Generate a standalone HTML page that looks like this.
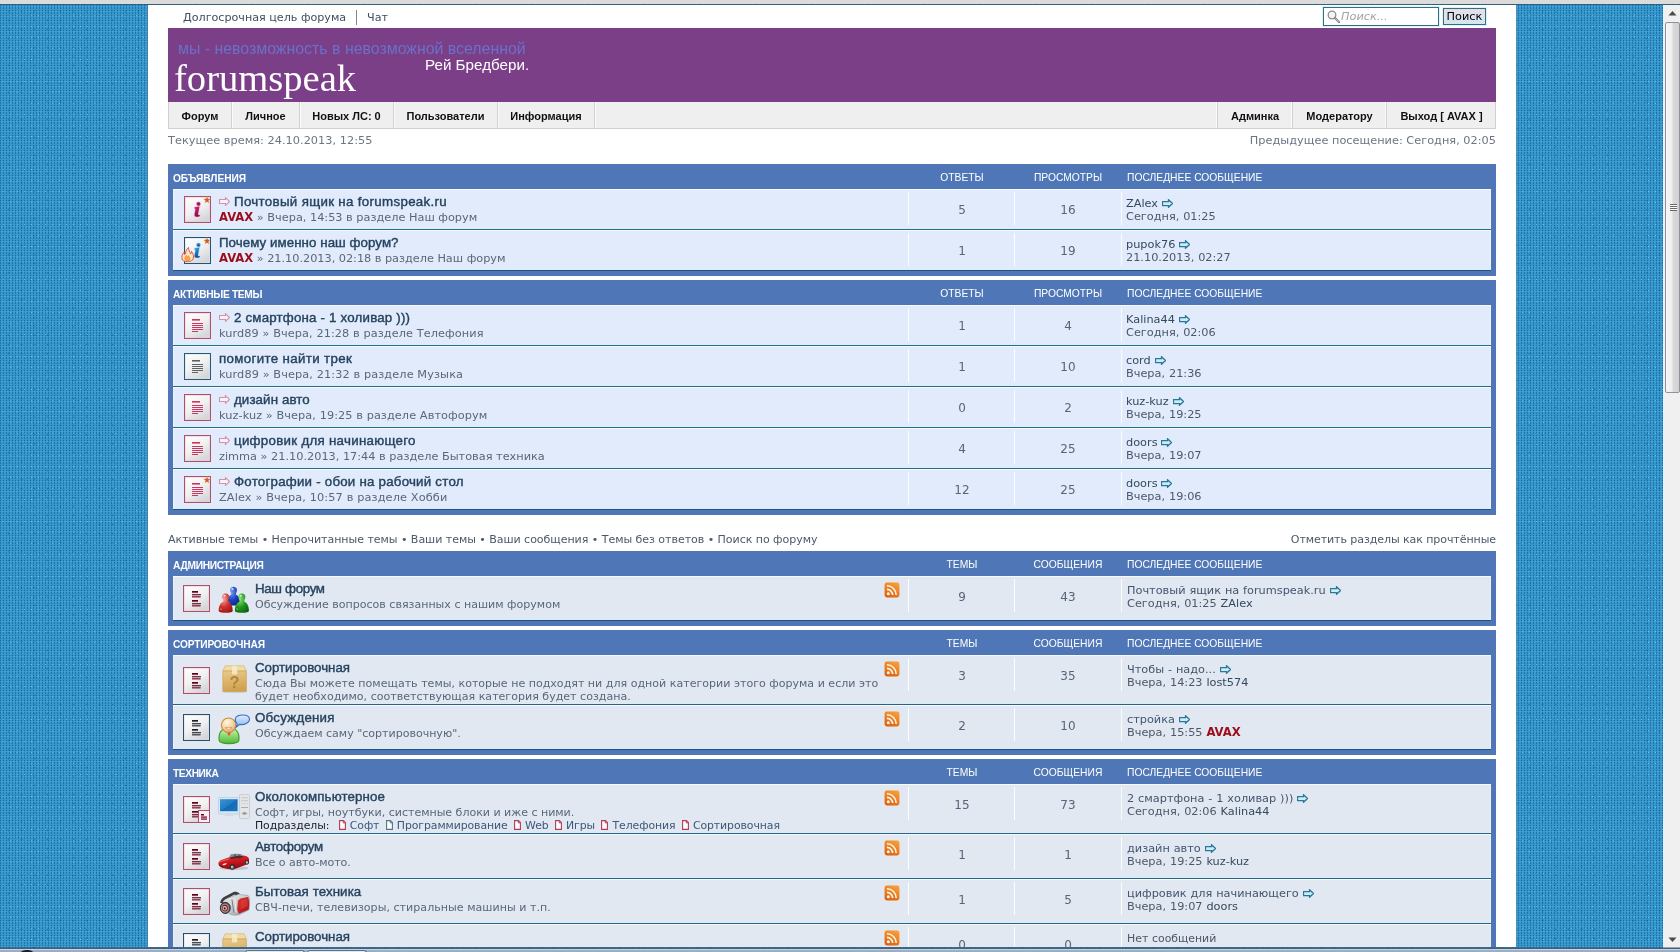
<!DOCTYPE html>
<html lang="ru"><head><meta charset="utf-8"><title>forumspeak • Главная страница</title>
<style>
html,body{margin:0;padding:0}
body{width:1680px;height:952px;overflow:hidden;position:relative;background-color:#3697ca;
background-image:radial-gradient(circle at .5px .5px,rgba(5,75,140,.6) 0,rgba(5,75,140,.6) .45px,rgba(5,75,140,0) 1.05px),radial-gradient(circle at .5px 3px,rgba(5,75,140,.5) 0,rgba(5,75,140,.5) .45px,rgba(5,75,140,0) 1.05px),radial-gradient(circle at 2px 1.75px,rgba(120,205,250,.22) 0,rgba(120,205,250,.22) .5px,rgba(120,205,250,0) 1.1px),radial-gradient(circle at 3.5px 4.5px,rgba(140,220,255,.55) 0,rgba(140,220,255,.55) .5px,rgba(140,220,255,0) 1px),radial-gradient(circle at 8.5px 2.5px,rgba(0,60,120,.35) 0,rgba(0,60,120,.35) .6px,rgba(0,60,120,0) 1.2px);
background-size:3px 5px,3px 5px,3px 5px,7px 11px,13px 9px;
font-family:"DejaVu Sans","Liberation Sans",sans-serif;font-size:11.3px;color:#56657a;line-height:13px}
*{box-sizing:border-box}
a{color:inherit;text-decoration:none}
.abs{position:absolute}
#chrome-top{position:absolute;left:0;top:0;width:1680px;height:4px;background:#dbdbdb}
#chrome-line{position:absolute;left:0;top:4px;width:1680px;height:1px;background:rgba(30,40,50,.5)}
#wrap{position:absolute;left:148px;top:5px;width:1368px;height:942px;background:#fff;overflow:hidden;box-shadow:0 0 2px 1px rgba(120,140,155,.45)}
#page{position:absolute;left:20px;top:-5px;width:1328px;height:952px;will-change:transform}
#sb{position:absolute;left:1663px;top:5px;width:17px;height:943px;background:#f0f0f0;border-left:1px solid #e4f2fa}
#sb .thumb{position:absolute;left:1px;top:17px;width:15px;height:371px;border:1px solid #8f9399;border-radius:2px;background:linear-gradient(90deg,#f7f7f7 0,#eeeeee 45%,#d9d9db 55%,#d2d2d5 100%)}
#sb .grip{position:absolute;left:4px;top:181px;width:7px;height:7px;background:repeating-linear-gradient(0deg,#6a6a6a 0,#6a6a6a 1px,#fdfdfd 1px,#fdfdfd 2px)}
#task{position:absolute;left:0;top:947px;width:1680px;height:5px;background:linear-gradient(180deg,rgba(40,70,100,.45) 0,rgba(40,70,100,.45) 1px,#46617a 1px,#46617a 2px,#c3d3e3 2px,#c3d3e3 3px,#9fb1c6 3px,#98abc1 100%)}
#task .b{position:absolute;top:3px;height:4px;border:1px solid #5e6f82;border-bottom:0;border-radius:3px 3px 0 0;background:#dfe8f2}
#task .orb{position:absolute;left:18px;top:3px;width:18px;height:8px;border-radius:10px 10px 0 0;background:#16202b}

.toplinks{position:absolute;left:15px;top:10px;height:15px;font-size:11.15px;line-height:15px;color:#3f4f60;white-space:nowrap}
.toplinks .sep{position:absolute;left:173px;top:0;width:1px;height:15px;background:#7a8796}
#sbox{position:absolute;left:1155px;top:7px;width:116px;height:19px;border:1px solid #2f7180;background:#fff;box-shadow:0 0 0 1px #d9f3f8}
#sbox span{position:absolute;left:17px;top:2px;font-style:italic;color:#a3a3a3;font-size:11.3px;line-height:14px}
#sbtn{position:absolute;left:1275px;top:8px;width:43px;height:17px;border:1px solid #2f7180;background:linear-gradient(180deg,#e9dde6 0,#dbe4ef 60%,#d3e6f2 100%);color:#000;font-size:11.3px;line-height:15px;text-align:center;box-shadow:0 0 0 1px #d9f3f8}
#banner{position:absolute;left:0;top:28px;width:1328px;height:74px;background:#7b3f87}
#banner .l1{position:absolute;left:10px;top:11px;font-family:"Liberation Sans","DejaVu Sans",sans-serif;font-size:15.9px;line-height:20px;color:#6b70c9;white-space:nowrap}
#banner .l2{position:absolute;left:257px;top:27px;font-family:"Liberation Sans","DejaVu Sans",sans-serif;font-size:15.2px;line-height:20px;color:#fff;white-space:nowrap}
#banner .logo{position:absolute;left:6px;top:28px;font-family:"Liberation Serif","DejaVu Serif",serif;font-size:38.6px;line-height:44px;color:#fff;white-space:nowrap}
#nav{position:absolute;left:0;top:102px;width:1328px;height:27px;background:#efefef;border:1px solid #cfcfcf;border-top:0;font-family:"Liberation Sans","DejaVu Sans",sans-serif;font-weight:bold;font-size:11px;color:#111;line-height:28px}
#nav a{position:absolute;top:0;height:26px;text-align:center;white-space:nowrap;border-right:1px solid #d2d2d2;box-shadow:1px 0 0 #fbfbfb}
#nav a.r{border-right:0;border-left:1px solid #d2d2d2;box-shadow:-1px 0 0 #fbfbfb}
.time{position:absolute;top:134px;font-size:11.3px;line-height:14px;color:#6b7583;white-space:nowrap}
.blk{position:absolute;left:0;width:1328px;background:#4f76b6}
.blk .hd{position:absolute;left:0;top:0;width:1328px;height:25px;color:#fff;font-family:"Liberation Sans","DejaVu Sans",sans-serif;font-size:10.3px;line-height:12px;text-transform:uppercase;white-space:nowrap}
.blk .hd b{position:absolute;left:5px;top:9px;font-size:10.2px}
.blk .hd span{position:absolute;top:8px}
.blk .hd .c1{left:741px;width:106px;text-align:center}
.blk .hd .c2{left:847px;width:106px;text-align:center}
.blk .hd .c3{left:959px}
.row{position:absolute;left:5px;width:1318px;background:#e1ebfb;border-left:1px solid transparent;box-shadow:inset 0 1px 0 #f6f9fe,inset 0 -1px 0 #d4f1f6}
.row:before{content:'';position:absolute;left:-1px;top:0;bottom:0;width:0;border-left:1px dotted #f6f9fe}
.row:after{content:'';position:absolute;right:0;top:0;bottom:0;width:0;border-left:1px dotted #f6f9fe}
.blk:after{content:'';position:absolute;left:5px;width:1318px;bottom:5px;height:1px;background:#25507f}
.frow{background:#e2e8f2}
.sepl{position:absolute;left:5px;width:1318px;height:1px;background:#2b6b88}
.row .vs{position:absolute;top:3px;height:33px;width:1px;background:#fff;opacity:.9}
.row .ic{position:absolute;left:10px;width:28px;height:28px}
.t{position:absolute;white-space:nowrap;font-family:"Liberation Sans","DejaVu Sans",sans-serif;font-weight:normal;color:#25435f;-webkit-text-stroke:.4px #25435f;font-size:13.3px;line-height:15px}
.s{position:absolute;white-space:nowrap;font-size:11.3px;line-height:13px;color:#596778}
.d{font-size:11.05px}
.s b.adm,.lp b.adm{color:#9b0d1b;font-weight:bold;font-size:11.6px}
.num{position:absolute;width:106px;text-align:center;font-size:12px;line-height:15px;color:#56657a}
.lp{position:absolute;left:952px;word-spacing:.3px;white-space:nowrap;font-size:11.3px;line-height:13px;color:#4c5868}
.lp a{color:#33495f}
.lp a.u{color:#40566f}
.links{position:absolute;top:533px;font-size:11.05px;line-height:14px;color:#4a596b;white-space:nowrap}
.sub{color:#1b1b25;font-size:10.9px}
.sub a{color:#3b5878}
svg{display:block}
.il{display:inline-block;vertical-align:baseline}
</style></head>
<body>
<div id="wrap"><div id="page">
<div class="toplinks"><a>Долгосрочная цель форума</a><i class="sep"></i><a class="abs" style="left:184px;top:0">Чат</a></div>
<div id="sbox"><svg width="14" height="14" viewBox="0 0 14 14" style="position:absolute;left:3px;top:2px"><circle cx="5" cy="5" r="3.8" fill="#f4f4f4" stroke="#8c8c8c" stroke-width="1.3"/><path d="M8 8 L12 12" stroke="#7a7a7a" stroke-width="2.2" stroke-linecap="round"/><path d="M8.4 8.4 L11.6 11.6" stroke="#d8d8d8" stroke-width=".8" stroke-linecap="round"/></svg><span>Поиск...</span></div><div id="sbtn">Поиск</div>
<div id="banner"><div class="l1">мы - невозможность в невозможной вселенной</div><div class="l2">Рей Бредбери.</div><div class="logo">forumspeak</div></div>
<div id="nav"><a style="left:0px;width:63px">Форум</a><a style="left:63px;width:68px">Личное</a><a style="left:131px;width:94px">Новых ЛС: 0</a><a style="left:225px;width:104px">Пользователи</a><a style="left:329px;width:97px">Информация</a><a class="r" style="left:1048px;width:75px">Админка</a><a class="r" style="left:1123px;width:94px">Модератору</a><a class="r" style="left:1217px;width:110px">Выход [ AVAX ]</a></div>
<div class="time" style="left:0;letter-spacing:0.035px">Текущее время: 24.10.2013, 12:55</div><div class="time" style="right:0;letter-spacing:0.017px">Предыдущее посещение: Сегодня, 02:05</div>
<div class="blk" style="top:164px;height:112px"><div class="hd"><b style="letter-spacing:-0.078px">Объявления</b><span class="c1">Ответы</span><span class="c2">Просмотры</span><span class="c3">Последнее сообщение</span></div><div class="row" style="top:25px;height:40px"><div class="ic" style="top:7px"><svg width="27" height="27" viewBox="0 0 27 27" style="overflow:visible"><defs><linearGradient id="g2" x1="0" y1="0" x2="0.6" y2="1"><stop offset="0" stop-color="#ffffff"/><stop offset=".55" stop-color="#f1f1f2"/><stop offset="1" stop-color="#d4d6d9"/></linearGradient></defs><rect x="0.5" y="0.5" width="26" height="26" fill="url(#g2)" stroke="#a8536c" stroke-width="1"/><rect x="1.5" y="1.5" width="24" height="24" fill="none" stroke="#f3c4d1" stroke-width="1" opacity=".55"/><defs><linearGradient id="g1" x1="0" y1="0" x2="0" y2="1"><stop offset="0" stop-color="#c2207a"/><stop offset="1" stop-color="#8f0f45"/></linearGradient></defs><g stroke="#f7bfd8" stroke-width="1.6" opacity=".9" fill="#f7bfd8"><circle cx="14.4" cy="7.9" r="1.7"/><path d="M10.7 11.3 L15.4 10.5 L14 18.3 Q13.9 19.4 15.8 19 L15.6 20.3 Q12.7 21.2 11.3 20.5 Q10.3 19.9 10.6 18.3 L11.6 12.8 L10.6 12.6 Z"/></g><g fill="url(#g1)"><circle cx="14.5" cy="7.8" r="1.9"/><path d="M10.7 11.3 L15.4 10.5 L14 18.3 Q13.9 19.4 15.8 19 L15.6 20.3 Q12.7 21.2 11.3 20.5 Q10.3 19.9 10.6 18.3 L11.6 12.8 L10.6 12.6 Z"/></g><path d="M23.00 0.10 L23.91 2.45 L26.42 2.59 L24.47 4.18 L25.12 6.61 L23.00 5.25 L20.88 6.61 L21.53 4.18 L19.58 2.59 L22.09 2.45 Z" fill="#cf5a22" stroke="#f0bf9f" stroke-width=".3" transform="translate(0 .4)"/></svg></div><div class="abs" style="left:45px;top:8px"><svg width="11" height="9" viewBox="0 0 11 9" style=""><path d="M0.5 2.5 H6.5 V0.7 L10.5 4.5 L6.5 8.3 V6.5 H0.5 Z" fill="#fdf1f6" stroke="#cf93ae" stroke-width="1.15"/></svg></div><a class="t" style="left:60px;top:5px;letter-spacing:0.33px">Почтовый ящик на forumspeak.ru</a><div class="s" style="left:45px;top:22px;letter-spacing:-0.003px"><b class="adm">AVAX</b> » Вчера, 14:53 в разделе Наш форум</div><i class="vs" style="left:734px"></i><i class="vs" style="left:840px"></i><i class="vs" style="left:946.5px;opacity:.8"></i><div class="num" style="left:735px;top:14px">5</div><div class="num" style="left:841px;top:14px">16</div><div class="lp" style="top:8px"><a>ZAlex</a> <svg width="11" height="9" viewBox="0 0 11 9" style="display:inline-block;vertical-align:-0.5px"><path d="M0.5 2.5 H6.5 V0.7 L10.5 4.5 L6.5 8.3 V6.5 H0.5 Z" fill="#c9edf8" stroke="#2d7698" stroke-width="1.25"/></svg><br>Сегодня, 01:25</div></div>
<i class="sepl" style="top:65px"></i><div class="row" style="top:66px;height:40px"><div class="ic" style="top:7px"><svg width="27" height="27" viewBox="0 0 27 27" style="overflow:visible"><defs><linearGradient id="g4" x1="0" y1="0" x2="0.6" y2="1"><stop offset="0" stop-color="#ffffff"/><stop offset=".55" stop-color="#f1f1f2"/><stop offset="1" stop-color="#d4d6d9"/></linearGradient></defs><rect x="0.5" y="0.5" width="26" height="26" fill="url(#g4)" stroke="#2d4f6c" stroke-width="1"/><rect x="1.5" y="1.5" width="24" height="24" fill="none" stroke="#cfe6ef" stroke-width="1" opacity=".55"/><defs><linearGradient id="g3" x1="0" y1="0" x2="0" y2="1"><stop offset="0" stop-color="#2f9be0"/><stop offset="1" stop-color="#174f96"/></linearGradient></defs><g stroke="#bfe3f7" stroke-width="1.6" opacity=".9" fill="#bfe3f7"><circle cx="14.4" cy="7.9" r="1.7"/><path d="M10.7 11.3 L15.4 10.5 L14 18.3 Q13.9 19.4 15.8 19 L15.6 20.3 Q12.7 21.2 11.3 20.5 Q10.3 19.9 10.6 18.3 L11.6 12.8 L10.6 12.6 Z"/></g><g fill="url(#g3)"><circle cx="14.5" cy="7.8" r="1.9"/><path d="M10.7 11.3 L15.4 10.5 L14 18.3 Q13.9 19.4 15.8 19 L15.6 20.3 Q12.7 21.2 11.3 20.5 Q10.3 19.9 10.6 18.3 L11.6 12.8 L10.6 12.6 Z"/></g><path d="M23.00 0.10 L23.91 2.45 L26.42 2.59 L24.47 4.18 L25.12 6.61 L23.00 5.25 L20.88 6.61 L21.53 4.18 L19.58 2.59 L22.09 2.45 Z" fill="#cf5a22" stroke="#f0bf9f" stroke-width=".3" transform="translate(0 .4)"/><g transform="translate(1 -1.6)"><path d="M-2.6 24.5 C-4 21 -2.5 18.5 -1 17 C-1 19 0 19.5 0.5 18.5 C0.5 15.5 2 13.5 3.5 12 C3.3 15 5 16 5.6 18.5 C6.3 17.8 6.6 17 6.5 16 C8.6 18.5 9.2 22 7.6 24.6 C5 26.6 -0.5 26.6 -2.6 24.5 Z" fill="#fbe3c4" stroke="#d9574a" stroke-width="1"/><path d="M0.2 24.3 C-0.8 22.5 0.4 21 1.4 20 C1.6 21.5 2.6 21.5 3 20.3 C4.6 21.5 5.4 23 4.6 24.6 C3.4 25.5 1.2 25.4 0.2 24.3 Z" fill="#f9a63a" stroke="#ee7b2b" stroke-width=".6"/></g></svg></div><a class="t" style="left:45px;top:5px;letter-spacing:0.062px">Почему именно наш форум?</a><div class="s" style="left:45px;top:22px;letter-spacing:-0.025px"><b class="adm">AVAX</b> » 21.10.2013, 02:18 в разделе Наш форум</div><i class="vs" style="left:734px"></i><i class="vs" style="left:840px"></i><i class="vs" style="left:946.5px;opacity:.8"></i><div class="num" style="left:735px;top:14px">1</div><div class="num" style="left:841px;top:14px">19</div><div class="lp" style="top:8px"><a>pupok76</a> <svg width="11" height="9" viewBox="0 0 11 9" style="display:inline-block;vertical-align:-0.5px"><path d="M0.5 2.5 H6.5 V0.7 L10.5 4.5 L6.5 8.3 V6.5 H0.5 Z" fill="#c9edf8" stroke="#2d7698" stroke-width="1.25"/></svg><br>21.10.2013, 02:27</div></div>
</div>
<div class="blk" style="top:280px;height:235px"><div class="hd"><b style="letter-spacing:-0.306px">Активные темы</b><span class="c1">Ответы</span><span class="c2">Просмотры</span><span class="c3">Последнее сообщение</span></div><div class="row" style="top:25px;height:40px"><div class="ic" style="top:7px"><svg width="27" height="27" viewBox="0 0 27 27" style="overflow:visible"><defs><linearGradient id="g5" x1="0" y1="0" x2="0.6" y2="1"><stop offset="0" stop-color="#ffffff"/><stop offset=".55" stop-color="#f1f1f2"/><stop offset="1" stop-color="#d4d6d9"/></linearGradient></defs><rect x="0.5" y="0.5" width="26" height="26" fill="url(#g5)" stroke="#a8536c" stroke-width="1"/><rect x="1.5" y="1.5" width="24" height="24" fill="none" stroke="#f5c6d2" stroke-width="1" opacity=".55"/><rect x="8" y="7" width="8" height="1.6" fill="#cf3561"/><rect x="8" y="11" width="11" height="1" fill="#cf3561"/><rect x="8" y="13" width="11" height="1" fill="#cf3561"/><rect x="8" y="15" width="11" height="1" fill="#cf3561"/><rect x="8" y="17" width="11" height="1" fill="#cf3561"/><rect x="8" y="19" width="6" height="1" fill="#cf3561"/></svg></div><div class="abs" style="left:45px;top:8px"><svg width="11" height="9" viewBox="0 0 11 9" style=""><path d="M0.5 2.5 H6.5 V0.7 L10.5 4.5 L6.5 8.3 V6.5 H0.5 Z" fill="#fdf1f6" stroke="#cf93ae" stroke-width="1.15"/></svg></div><a class="t" style="left:60px;top:5px;letter-spacing:0.195px">2 смартфона - 1 холивар )))</a><div class="s" style="left:45px;top:22px;letter-spacing:0.082px">kurd89 » Вчера, 21:28 в разделе Телефония</div><i class="vs" style="left:734px"></i><i class="vs" style="left:840px"></i><i class="vs" style="left:946.5px;opacity:.8"></i><div class="num" style="left:735px;top:14px">1</div><div class="num" style="left:841px;top:14px">4</div><div class="lp" style="top:8px"><a>Kalina44</a> <svg width="11" height="9" viewBox="0 0 11 9" style="display:inline-block;vertical-align:-0.5px"><path d="M0.5 2.5 H6.5 V0.7 L10.5 4.5 L6.5 8.3 V6.5 H0.5 Z" fill="#c9edf8" stroke="#2d7698" stroke-width="1.25"/></svg><br>Сегодня, 02:06</div></div>
<i class="sepl" style="top:65px"></i><div class="row" style="top:66px;height:40px"><div class="ic" style="top:7px"><svg width="27" height="27" viewBox="0 0 27 27" style="overflow:visible"><defs><linearGradient id="g6" x1="0" y1="0" x2="0.6" y2="1"><stop offset="0" stop-color="#ffffff"/><stop offset=".55" stop-color="#f1f1f2"/><stop offset="1" stop-color="#d4d6d9"/></linearGradient></defs><rect x="0.5" y="0.5" width="26" height="26" fill="url(#g6)" stroke="#2b5a68" stroke-width="1"/><rect x="1.5" y="1.5" width="24" height="24" fill="none" stroke="#cfe6ec" stroke-width="1" opacity=".55"/><rect x="8" y="7" width="8" height="1.6" fill="#5f6361"/><rect x="8" y="11" width="11" height="1" fill="#5f6361"/><rect x="8" y="13" width="11" height="1" fill="#5f6361"/><rect x="8" y="15" width="11" height="1" fill="#5f6361"/><rect x="8" y="17" width="11" height="1" fill="#5f6361"/><rect x="8" y="19" width="6" height="1" fill="#5f6361"/></svg></div><a class="t" style="left:45px;top:5px;letter-spacing:0.346px">помогите найти трек</a><div class="s" style="left:45px;top:22px;letter-spacing:0.102px">kurd89 » Вчера, 21:32 в разделе Музыка</div><i class="vs" style="left:734px"></i><i class="vs" style="left:840px"></i><i class="vs" style="left:946.5px;opacity:.8"></i><div class="num" style="left:735px;top:14px">1</div><div class="num" style="left:841px;top:14px">10</div><div class="lp" style="top:8px"><a>cord</a> <svg width="11" height="9" viewBox="0 0 11 9" style="display:inline-block;vertical-align:-0.5px"><path d="M0.5 2.5 H6.5 V0.7 L10.5 4.5 L6.5 8.3 V6.5 H0.5 Z" fill="#c9edf8" stroke="#2d7698" stroke-width="1.25"/></svg><br>Вчера, 21:36</div></div>
<i class="sepl" style="top:106px"></i><div class="row" style="top:107px;height:40px"><div class="ic" style="top:7px"><svg width="27" height="27" viewBox="0 0 27 27" style="overflow:visible"><defs><linearGradient id="g7" x1="0" y1="0" x2="0.6" y2="1"><stop offset="0" stop-color="#ffffff"/><stop offset=".55" stop-color="#f1f1f2"/><stop offset="1" stop-color="#d4d6d9"/></linearGradient></defs><rect x="0.5" y="0.5" width="26" height="26" fill="url(#g7)" stroke="#a8536c" stroke-width="1"/><rect x="1.5" y="1.5" width="24" height="24" fill="none" stroke="#f5c6d2" stroke-width="1" opacity=".55"/><rect x="8" y="7" width="8" height="1.6" fill="#cf3561"/><rect x="8" y="11" width="11" height="1" fill="#cf3561"/><rect x="8" y="13" width="11" height="1" fill="#cf3561"/><rect x="8" y="15" width="11" height="1" fill="#cf3561"/><rect x="8" y="17" width="11" height="1" fill="#cf3561"/><rect x="8" y="19" width="6" height="1" fill="#cf3561"/></svg></div><div class="abs" style="left:45px;top:8px"><svg width="11" height="9" viewBox="0 0 11 9" style=""><path d="M0.5 2.5 H6.5 V0.7 L10.5 4.5 L6.5 8.3 V6.5 H0.5 Z" fill="#fdf1f6" stroke="#cf93ae" stroke-width="1.15"/></svg></div><a class="t" style="left:60px;top:5px;letter-spacing:0.109px">дизайн авто</a><div class="s" style="left:45px;top:22px;letter-spacing:0.074px">kuz-kuz » Вчера, 19:25 в разделе Автофорум</div><i class="vs" style="left:734px"></i><i class="vs" style="left:840px"></i><i class="vs" style="left:946.5px;opacity:.8"></i><div class="num" style="left:735px;top:14px">0</div><div class="num" style="left:841px;top:14px">2</div><div class="lp" style="top:8px"><a>kuz-kuz</a> <svg width="11" height="9" viewBox="0 0 11 9" style="display:inline-block;vertical-align:-0.5px"><path d="M0.5 2.5 H6.5 V0.7 L10.5 4.5 L6.5 8.3 V6.5 H0.5 Z" fill="#c9edf8" stroke="#2d7698" stroke-width="1.25"/></svg><br>Вчера, 19:25</div></div>
<i class="sepl" style="top:147px"></i><div class="row" style="top:148px;height:40px"><div class="ic" style="top:7px"><svg width="27" height="27" viewBox="0 0 27 27" style="overflow:visible"><defs><linearGradient id="g8" x1="0" y1="0" x2="0.6" y2="1"><stop offset="0" stop-color="#ffffff"/><stop offset=".55" stop-color="#f1f1f2"/><stop offset="1" stop-color="#d4d6d9"/></linearGradient></defs><rect x="0.5" y="0.5" width="26" height="26" fill="url(#g8)" stroke="#a8536c" stroke-width="1"/><rect x="1.5" y="1.5" width="24" height="24" fill="none" stroke="#f5c6d2" stroke-width="1" opacity=".55"/><rect x="8" y="7" width="8" height="1.6" fill="#cf3561"/><rect x="8" y="11" width="11" height="1" fill="#cf3561"/><rect x="8" y="13" width="11" height="1" fill="#cf3561"/><rect x="8" y="15" width="11" height="1" fill="#cf3561"/><rect x="8" y="17" width="11" height="1" fill="#cf3561"/><rect x="8" y="19" width="6" height="1" fill="#cf3561"/></svg></div><div class="abs" style="left:45px;top:8px"><svg width="11" height="9" viewBox="0 0 11 9" style=""><path d="M0.5 2.5 H6.5 V0.7 L10.5 4.5 L6.5 8.3 V6.5 H0.5 Z" fill="#fdf1f6" stroke="#cf93ae" stroke-width="1.15"/></svg></div><a class="t" style="left:60px;top:5px;letter-spacing:0.289px">цифровик для начинающего</a><div class="s" style="left:45px;top:22px;letter-spacing:-0.001px">zimma » 21.10.2013, 17:44 в разделе Бытовая техника</div><i class="vs" style="left:734px"></i><i class="vs" style="left:840px"></i><i class="vs" style="left:946.5px;opacity:.8"></i><div class="num" style="left:735px;top:14px">4</div><div class="num" style="left:841px;top:14px">25</div><div class="lp" style="top:8px"><a>doors</a> <svg width="11" height="9" viewBox="0 0 11 9" style="display:inline-block;vertical-align:-0.5px"><path d="M0.5 2.5 H6.5 V0.7 L10.5 4.5 L6.5 8.3 V6.5 H0.5 Z" fill="#c9edf8" stroke="#2d7698" stroke-width="1.25"/></svg><br>Вчера, 19:07</div></div>
<i class="sepl" style="top:188px"></i><div class="row" style="top:189px;height:40px"><div class="ic" style="top:7px"><svg width="27" height="27" viewBox="0 0 27 27" style="overflow:visible"><defs><linearGradient id="g9" x1="0" y1="0" x2="0.6" y2="1"><stop offset="0" stop-color="#ffffff"/><stop offset=".55" stop-color="#f1f1f2"/><stop offset="1" stop-color="#d4d6d9"/></linearGradient></defs><rect x="0.5" y="0.5" width="26" height="26" fill="url(#g9)" stroke="#a8536c" stroke-width="1"/><rect x="1.5" y="1.5" width="24" height="24" fill="none" stroke="#f5c6d2" stroke-width="1" opacity=".55"/><rect x="8" y="7" width="8" height="1.6" fill="#cf3561"/><rect x="8" y="11" width="11" height="1" fill="#cf3561"/><rect x="8" y="13" width="11" height="1" fill="#cf3561"/><rect x="8" y="15" width="11" height="1" fill="#cf3561"/><rect x="8" y="17" width="11" height="1" fill="#cf3561"/><rect x="8" y="19" width="6" height="1" fill="#cf3561"/><path d="M23.00 0.10 L23.91 2.45 L26.42 2.59 L24.47 4.18 L25.12 6.61 L23.00 5.25 L20.88 6.61 L21.53 4.18 L19.58 2.59 L22.09 2.45 Z" fill="#cf5a22" stroke="#f0bf9f" stroke-width=".3" transform="translate(0 .4)"/></svg></div><div class="abs" style="left:45px;top:8px"><svg width="11" height="9" viewBox="0 0 11 9" style=""><path d="M0.5 2.5 H6.5 V0.7 L10.5 4.5 L6.5 8.3 V6.5 H0.5 Z" fill="#fdf1f6" stroke="#cf93ae" stroke-width="1.15"/></svg></div><a class="t" style="left:60px;top:5px;letter-spacing:0.228px">Фотографии - обои на рабочий стол</a><div class="s" style="left:45px;top:22px;letter-spacing:0.129px">ZAlex » Вчера, 10:57 в разделе Хобби</div><i class="vs" style="left:734px"></i><i class="vs" style="left:840px"></i><i class="vs" style="left:946.5px;opacity:.8"></i><div class="num" style="left:735px;top:14px">12</div><div class="num" style="left:841px;top:14px">25</div><div class="lp" style="top:8px"><a>doors</a> <svg width="11" height="9" viewBox="0 0 11 9" style="display:inline-block;vertical-align:-0.5px"><path d="M0.5 2.5 H6.5 V0.7 L10.5 4.5 L6.5 8.3 V6.5 H0.5 Z" fill="#c9edf8" stroke="#2d7698" stroke-width="1.25"/></svg><br>Вчера, 19:06</div></div>
</div>
<div class="links" style="left:0;letter-spacing:-0.051px">Активные темы • Непрочитанные темы • Ваши темы • Ваши сообщения • Темы без ответов • Поиск по форуму</div><div class="links" style="right:0;letter-spacing:-0.092px">Отметить разделы как прочтённые</div>
<div class="blk" style="top:551px;height:75px"><div class="hd"><b style="letter-spacing:-0.284px">Администрация</b><span class="c1">Темы</span><span class="c2">Сообщения</span><span class="c3">Последнее сообщение</span></div><div class="row frow" style="top:25px;height:44px"><div class="ic" style="left:9px;top:9px"><svg width="27" height="27" viewBox="0 0 27 27" style=""><defs><linearGradient id="g10" x1="0" y1="0" x2="0.6" y2="1"><stop offset="0" stop-color="#ffffff"/><stop offset=".55" stop-color="#f1f1f2"/><stop offset="1" stop-color="#d4d6d9"/></linearGradient></defs><rect x="0.5" y="0.5" width="26" height="26" fill="url(#g10)" stroke="#a8536c" stroke-width="1"/><rect x="1.5" y="1.5" width="24" height="24" fill="none" stroke="#f5c6d2" stroke-width="1" opacity=".55"/><rect x="9" y="6.9" width="6" height="1.2" fill="#e2557c"/><rect x="9" y="10.0" width="9" height="0.5" fill="#e2557c"/><rect x="9" y="12.1" width="8.6" height="0.5" fill="#e2557c"/><rect x="9" y="6" width="6" height="1.4" fill="#4a0a1c"/><rect x="9" y="9.2" width="9" height="0.9" fill="#4a0a1c"/><rect x="9" y="11.3" width="8.6" height="0.9" fill="#4a0a1c"/><rect x="9" y="15.9" width="6" height="1.2" fill="#e2557c"/><rect x="9" y="19.0" width="9" height="0.5" fill="#e2557c"/><rect x="9" y="21.1" width="8.6" height="0.5" fill="#e2557c"/><rect x="9" y="15" width="6" height="1.4" fill="#4a0a1c"/><rect x="9" y="18.2" width="9" height="0.9" fill="#4a0a1c"/><rect x="9" y="20.3" width="8.6" height="0.9" fill="#4a0a1c"/></svg></div><div class="abs" style="left:45px;top:10px"><svg width="32" height="28" viewBox="0 0 32 28" style="overflow:visible"><defs><radialGradient id="g11" cx=".35" cy=".3" r=".85"><stop offset="0" stop-color="#6f9cf0"/><stop offset=".5" stop-color="#1c3fc0"/><stop offset="1" stop-color="#0b1f7a"/></radialGradient></defs><g transform="translate(14.6 9.4) scale(1.0)" fill="url(#g11)"><path d="M0 -8.6 C2.6 -8.6 3.8 -6.4 3.3 -4.4 C2.9 -2.8 2.2 -2 2.4 -0.6 C5.4 0.6 6.9 4 6.8 8.6 C5 10.6 -5 10.6 -6.8 8.6 C-6.9 4 -5.4 0.6 -2.4 -0.6 C-2.2 -2 -2.9 -2.8 -3.3 -4.4 C-3.8 -6.4 -2.6 -8.6 0 -8.6 Z"/><ellipse cx="-1.2" cy="-6.4" rx="1.2" ry=".9" fill="#fff" opacity=".75"/><ellipse cx="-4.6" cy="6.6" rx=".8" ry=".6" fill="#fff" opacity=".6"/></g><defs><radialGradient id="g12" cx=".35" cy=".3" r=".85"><stop offset="0" stop-color="#f7a59a"/><stop offset=".5" stop-color="#cf2f2a"/><stop offset="1" stop-color="#8a1512"/></radialGradient></defs><g transform="translate(6.7 16.3) scale(1.03)" fill="url(#g12)"><path d="M0 -8.6 C2.6 -8.6 3.8 -6.4 3.3 -4.4 C2.9 -2.8 2.2 -2 2.4 -0.6 C5.4 0.6 6.9 4 6.8 8.6 C5 10.6 -5 10.6 -6.8 8.6 C-6.9 4 -5.4 0.6 -2.4 -0.6 C-2.2 -2 -2.9 -2.8 -3.3 -4.4 C-3.8 -6.4 -2.6 -8.6 0 -8.6 Z"/><ellipse cx="-1.2" cy="-6.4" rx="1.2" ry=".9" fill="#fff" opacity=".75"/><ellipse cx="-4.6" cy="6.6" rx=".8" ry=".6" fill="#fff" opacity=".6"/></g><defs><radialGradient id="g13" cx=".35" cy=".3" r=".85"><stop offset="0" stop-color="#8fe27e"/><stop offset=".5" stop-color="#1f9a1d"/><stop offset="1" stop-color="#0b5a0f"/></radialGradient></defs><g transform="translate(22.9 16.3) scale(1.03)" fill="url(#g13)"><path d="M0 -8.6 C2.6 -8.6 3.8 -6.4 3.3 -4.4 C2.9 -2.8 2.2 -2 2.4 -0.6 C5.4 0.6 6.9 4 6.8 8.6 C5 10.6 -5 10.6 -6.8 8.6 C-6.9 4 -5.4 0.6 -2.4 -0.6 C-2.2 -2 -2.9 -2.8 -3.3 -4.4 C-3.8 -6.4 -2.6 -8.6 0 -8.6 Z"/><ellipse cx="-1.2" cy="-6.4" rx="1.2" ry=".9" fill="#fff" opacity=".75"/><ellipse cx="-4.6" cy="6.6" rx=".8" ry=".6" fill="#fff" opacity=".6"/></g></svg></div><a class="t" style="left:81px;top:5px;letter-spacing:-0.324px">Наш форум</a><div class="s d" style="left:81px;top:22px;letter-spacing:-0.001px">Обсуждение вопросов связанных с нашим форумом</div><div class="abs" style="left:710px;top:6px"><svg width="16" height="16" viewBox="0 0 16 16" style=""><defs><linearGradient id="g14" x1=".8" y1="0" x2=".3" y2="1"><stop offset="0" stop-color="#f4a23f"/><stop offset=".5" stop-color="#e8812a"/><stop offset="1" stop-color="#d5651d"/></linearGradient></defs><rect x="0" y="0" width="16" height="16" rx="3" fill="#fbdcc0"/><rect x="0.6" y="0.6" width="14.8" height="14.8" rx="2.4" fill="url(#g14)"/><circle cx="4.3" cy="11.7" r="1.5" fill="#fff6dc"/><path d="M2.9 7.4 A5.7 5.7 0 0 1 8.6 13.1" fill="none" stroke="#fff6dc" stroke-width="1.6"/><path d="M2.9 3.8 A9.3 9.3 0 0 1 12.2 13.1" fill="none" stroke="#fff6dc" stroke-width="1.6"/></svg></div><i class="vs" style="left:734px"></i><i class="vs" style="left:840px"></i><i class="vs" style="left:946.5px;opacity:.8"></i><div class="num" style="left:735px;top:14px">9</div><div class="num" style="left:841px;top:14px">43</div><div class="lp" style="left:953px;top:8px"><a class="u">Почтовый ящик на forumspeak.ru</a> <svg width="11" height="9" viewBox="0 0 11 9" style="display:inline-block;vertical-align:-0.5px"><path d="M0.5 2.5 H6.5 V0.7 L10.5 4.5 L6.5 8.3 V6.5 H0.5 Z" fill="#c9edf8" stroke="#2d7698" stroke-width="1.25"/></svg><br>Сегодня, 01:25 <a>ZAlex</a></div></div>
</div>
<div class="blk" style="top:630px;height:125px"><div class="hd"><b style="letter-spacing:-0.171px">Сортировочная</b><span class="c1">Темы</span><span class="c2">Сообщения</span><span class="c3">Последнее сообщение</span></div><div class="row frow" style="top:25px;height:49px"><div class="ic" style="left:9px;top:12px"><svg width="27" height="27" viewBox="0 0 27 27" style=""><defs><linearGradient id="g15" x1="0" y1="0" x2="0.6" y2="1"><stop offset="0" stop-color="#ffffff"/><stop offset=".55" stop-color="#f1f1f2"/><stop offset="1" stop-color="#d4d6d9"/></linearGradient></defs><rect x="0.5" y="0.5" width="26" height="26" fill="url(#g15)" stroke="#a8536c" stroke-width="1"/><rect x="1.5" y="1.5" width="24" height="24" fill="none" stroke="#f5c6d2" stroke-width="1" opacity=".55"/><rect x="9" y="6.9" width="6" height="1.2" fill="#e2557c"/><rect x="9" y="10.0" width="9" height="0.5" fill="#e2557c"/><rect x="9" y="12.1" width="8.6" height="0.5" fill="#e2557c"/><rect x="9" y="6" width="6" height="1.4" fill="#4a0a1c"/><rect x="9" y="9.2" width="9" height="0.9" fill="#4a0a1c"/><rect x="9" y="11.3" width="8.6" height="0.9" fill="#4a0a1c"/><rect x="9" y="15.9" width="6" height="1.2" fill="#e2557c"/><rect x="9" y="19.0" width="9" height="0.5" fill="#e2557c"/><rect x="9" y="21.1" width="8.6" height="0.5" fill="#e2557c"/><rect x="9" y="15" width="6" height="1.4" fill="#4a0a1c"/><rect x="9" y="18.2" width="9" height="0.9" fill="#4a0a1c"/><rect x="9" y="20.3" width="8.6" height="0.9" fill="#4a0a1c"/></svg></div><div class="abs" style="left:46px;top:10px"><svg width="32" height="29" viewBox="0 0 32 29" style=""><defs><linearGradient id="g16" x1="0" y1="0" x2="0.2" y2="1"><stop offset="0" stop-color="#e9cb8b"/><stop offset="1" stop-color="#d0a24f"/></linearGradient></defs><ellipse cx="14.5" cy="26.6" rx="13.5" ry="1.5" fill="#8e99a6" opacity=".3"/><path d="M5.2 0.8 H24 L26.4 6 H2.8 Z" fill="#f0dcab" stroke="#d2ac60" stroke-width=".6"/><rect x="2.8" y="6" width="23.6" height="20.4" rx="1" fill="url(#g16)" stroke="#c79a48" stroke-width=".6"/><rect x="12" y="0.8" width="5.2" height="8.6" fill="#f6ebca" opacity=".85"/><text x="14.6" y="23.4" text-anchor="middle" font-family="'Liberation Sans',sans-serif" font-weight="bold" font-size="16.5" fill="#b0873f">?</text></svg></div><a class="t" style="left:81px;top:5px;letter-spacing:-0.025px">Сортировочная</a><div class="s d" style="left:81px;top:22px;letter-spacing:0.003px">Сюда Вы можете помещать темы, которые не подходят ни для одной категории этого форума и если это</div><div class="s d" style="left:81px;top:35px;letter-spacing:0.005px">будет необходимо, соответствующая категория будет создана.</div><div class="abs" style="left:710px;top:6px"><svg width="16" height="16" viewBox="0 0 16 16" style=""><defs><linearGradient id="g21" x1=".8" y1="0" x2=".3" y2="1"><stop offset="0" stop-color="#f4a23f"/><stop offset=".5" stop-color="#e8812a"/><stop offset="1" stop-color="#d5651d"/></linearGradient></defs><rect x="0" y="0" width="16" height="16" rx="3" fill="#fbdcc0"/><rect x="0.6" y="0.6" width="14.8" height="14.8" rx="2.4" fill="url(#g21)"/><circle cx="4.3" cy="11.7" r="1.5" fill="#fff6dc"/><path d="M2.9 7.4 A5.7 5.7 0 0 1 8.6 13.1" fill="none" stroke="#fff6dc" stroke-width="1.6"/><path d="M2.9 3.8 A9.3 9.3 0 0 1 12.2 13.1" fill="none" stroke="#fff6dc" stroke-width="1.6"/></svg></div><i class="vs" style="left:734px"></i><i class="vs" style="left:840px"></i><i class="vs" style="left:946.5px;opacity:.8"></i><div class="num" style="left:735px;top:14px">3</div><div class="num" style="left:841px;top:14px">35</div><div class="lp" style="left:953px;top:8px"><a class="u">Чтобы - надо...</a> <svg width="11" height="9" viewBox="0 0 11 9" style="display:inline-block;vertical-align:-0.5px"><path d="M0.5 2.5 H6.5 V0.7 L10.5 4.5 L6.5 8.3 V6.5 H0.5 Z" fill="#c9edf8" stroke="#2d7698" stroke-width="1.25"/></svg><br>Вчера, 14:23 <a>lost574</a></div></div>
<i class="sepl" style="top:74px;background:#2e5f85"></i><div class="row frow" style="top:75px;height:44px"><div class="ic" style="left:9px;top:9px"><svg width="27" height="27" viewBox="0 0 27 27" style=""><defs><linearGradient id="g17" x1="0" y1="0" x2="0.6" y2="1"><stop offset="0" stop-color="#ffffff"/><stop offset=".55" stop-color="#f1f1f2"/><stop offset="1" stop-color="#d4d6d9"/></linearGradient></defs><rect x="0.5" y="0.5" width="26" height="26" fill="url(#g17)" stroke="#2b4f66" stroke-width="1"/><rect x="1.5" y="1.5" width="24" height="24" fill="none" stroke="#cfe0ec" stroke-width="1" opacity=".55"/><rect x="9" y="6.9" width="6" height="1.2" fill="#8a9096"/><rect x="9" y="10.0" width="9" height="0.5" fill="#8a9096"/><rect x="9" y="12.1" width="8.6" height="0.5" fill="#8a9096"/><rect x="9" y="6" width="6" height="1.4" fill="#1c1f24"/><rect x="9" y="9.2" width="9" height="0.9" fill="#1c1f24"/><rect x="9" y="11.3" width="8.6" height="0.9" fill="#1c1f24"/><rect x="9" y="15.9" width="6" height="1.2" fill="#8a9096"/><rect x="9" y="19.0" width="9" height="0.5" fill="#8a9096"/><rect x="9" y="21.1" width="8.6" height="0.5" fill="#8a9096"/><rect x="9" y="15" width="6" height="1.4" fill="#1c1f24"/><rect x="9" y="18.2" width="9" height="0.9" fill="#1c1f24"/><rect x="9" y="20.3" width="8.6" height="0.9" fill="#1c1f24"/></svg></div><div class="abs" style="left:44px;top:6px"><svg width="34" height="37" viewBox="0 0 34 37" style=""><defs><radialGradient id="g18" cx=".4" cy=".3" r=".8"><stop offset="0" stop-color="#fff6e4"/><stop offset=".55" stop-color="#f5d29c"/><stop offset="1" stop-color="#dd9a55"/></radialGradient><linearGradient id="g19" x1="0" y1="0" x2="0" y2="1"><stop offset="0" stop-color="#d3f3bf"/><stop offset=".5" stop-color="#8ed873"/><stop offset="1" stop-color="#4fb83a"/></linearGradient><linearGradient id="g20" x1="0" y1="0" x2="0" y2="1"><stop offset="0" stop-color="#dcecfc"/><stop offset="1" stop-color="#86b8ee"/></linearGradient></defs><path d="M1.2 29.5 C0.2 23 3 18.2 7.5 17 H14.5 C19 18.2 21.8 23 20.8 29.5 C19.6 33.6 2.4 33.6 1.2 29.5 Z" fill="url(#g19)" stroke="#3d9a2a" stroke-width="1.1"/><path d="M8.6 20.6 L11 25.2 L13.4 20.6 Z" fill="#e0522c"/><circle cx="10.6" cy="14.2" r="7.2" fill="url(#g18)" stroke="#cc8c48" stroke-width="1.1"/><path d="M7.2 16.6 Q10.6 20 14 16.6 Z" fill="#fff" stroke="#c97a3a" stroke-width=".6"/><path d="M17.4 7.6 C18.6 3.2 30.4 2.6 31.4 7.4 C32.2 12 25.6 14.4 21.6 13.4 L18.2 16.2 L19.2 12.6 C17.6 11.4 16.9 9.4 17.4 7.6 Z" fill="url(#g20)" stroke="#3a6ec2" stroke-width="1.1"/></svg></div><a class="t" style="left:81px;top:5px;letter-spacing:0.247px">Обсуждения</a><div class="s d" style="left:81px;top:22px;letter-spacing:-0.012px">Обсуждаем саму "сортировочную".</div><div class="abs" style="left:710px;top:6px"><svg width="16" height="16" viewBox="0 0 16 16" style=""><defs><linearGradient id="g22" x1=".8" y1="0" x2=".3" y2="1"><stop offset="0" stop-color="#f4a23f"/><stop offset=".5" stop-color="#e8812a"/><stop offset="1" stop-color="#d5651d"/></linearGradient></defs><rect x="0" y="0" width="16" height="16" rx="3" fill="#fbdcc0"/><rect x="0.6" y="0.6" width="14.8" height="14.8" rx="2.4" fill="url(#g22)"/><circle cx="4.3" cy="11.7" r="1.5" fill="#fff6dc"/><path d="M2.9 7.4 A5.7 5.7 0 0 1 8.6 13.1" fill="none" stroke="#fff6dc" stroke-width="1.6"/><path d="M2.9 3.8 A9.3 9.3 0 0 1 12.2 13.1" fill="none" stroke="#fff6dc" stroke-width="1.6"/></svg></div><i class="vs" style="left:734px"></i><i class="vs" style="left:840px"></i><i class="vs" style="left:946.5px;opacity:.8"></i><div class="num" style="left:735px;top:14px">2</div><div class="num" style="left:841px;top:14px">10</div><div class="lp" style="left:953px;top:8px"><a class="u">стройка</a> <svg width="11" height="9" viewBox="0 0 11 9" style="display:inline-block;vertical-align:-0.5px"><path d="M0.5 2.5 H6.5 V0.7 L10.5 4.5 L6.5 8.3 V6.5 H0.5 Z" fill="#c9edf8" stroke="#2d7698" stroke-width="1.25"/></svg><br>Вчера, 15:55 <b class="adm">AVAX</b></div></div>
</div>
<div class="blk" style="top:759px;height:260px"><div class="hd"><b style="letter-spacing:-0.388px">Техника</b><span class="c1">Темы</span><span class="c2">Сообщения</span><span class="c3">Последнее сообщение</span></div><div class="row frow" style="top:25px;height:49px"><div class="ic" style="left:9px;top:12px"><svg width="27" height="27" viewBox="0 0 27 27" style=""><defs><linearGradient id="g23" x1="0" y1="0" x2="0.6" y2="1"><stop offset="0" stop-color="#ffffff"/><stop offset=".55" stop-color="#f1f1f2"/><stop offset="1" stop-color="#d4d6d9"/></linearGradient></defs><rect x="0.5" y="0.5" width="26" height="26" fill="url(#g23)" stroke="#a8536c" stroke-width="1"/><rect x="1.5" y="1.5" width="24" height="24" fill="none" stroke="#f5c6d2" stroke-width="1" opacity=".55"/><rect x="9" y="6.9" width="6" height="1.2" fill="#e2557c"/><rect x="9" y="10.0" width="9" height="0.5" fill="#e2557c"/><rect x="9" y="12.1" width="8.6" height="0.5" fill="#e2557c"/><rect x="9" y="6" width="6" height="1.4" fill="#4a0a1c"/><rect x="9" y="9.2" width="9" height="0.9" fill="#4a0a1c"/><rect x="9" y="11.3" width="8.6" height="0.9" fill="#4a0a1c"/><rect x="9" y="15.9" width="6" height="1.2" fill="#e2557c"/><rect x="9" y="19.0" width="9" height="0.5" fill="#e2557c"/><rect x="9" y="21.1" width="8.6" height="0.5" fill="#e2557c"/><rect x="9" y="15" width="6" height="1.4" fill="#4a0a1c"/><rect x="9" y="18.2" width="9" height="0.9" fill="#4a0a1c"/><rect x="9" y="20.3" width="8.6" height="0.9" fill="#4a0a1c"/><rect x="15.5" y="14.5" width="11" height="12" fill="#fdeef2" stroke="#a8536c"/><rect x="18" y="18.6" width="3" height="1.2" fill="#e2557c"/><rect x="18" y="21" width="6" height="1" fill="#e2557c"/><rect x="18" y="23" width="6" height="1" fill="#e2557c"/><rect x="18" y="18" width="3" height="1.2" fill="#4a0a1c"/><rect x="18" y="20.5" width="6" height="0.8" fill="#4a0a1c"/><rect x="18" y="22.5" width="6" height="0.8" fill="#4a0a1c"/></svg></div><div class="abs" style="left:44px;top:10px"><svg width="32" height="26" viewBox="0 0 32 26" style=""><defs><linearGradient id="g24" x1="0" y1="0" x2="1" y2="1"><stop offset="0" stop-color="#3b93d6"/><stop offset=".5" stop-color="#1f7cc4"/><stop offset=".51" stop-color="#146bb3"/><stop offset="1" stop-color="#1a74bc"/></linearGradient></defs><rect x="21.5" y="0.5" width="10" height="24" rx="1" fill="#e3e5e7" stroke="#c3c7cb" stroke-width=".8"/><rect x="23" y="3" width="7" height="1.2" fill="#c9ccd0"/><rect x="23" y="6" width="7" height="1.2" fill="#c9ccd0"/><rect x="23" y="9" width="7" height="1.2" fill="#d4d7da"/><rect x="23" y="13" width="7" height="1" fill="#a9adb2"/><path d="M23.4 19.4 L26.5 17.8 L29.6 19.4 L26.5 21 Z" fill="#9a9ea3"/><rect x="0.5" y="3.5" width="21" height="16.5" rx="1" fill="#d6e6f4" stroke="#b9cfe3" stroke-width=".8"/><rect x="2" y="5.2" width="17.6" height="12" fill="url(#g24)"/><rect x="7" y="20.4" width="8" height="2" fill="#d5dae0"/><rect x="4" y="22.2" width="14" height="1.6" rx=".8" fill="#e6e9ec"/></svg></div><a class="t" style="left:81px;top:5px;letter-spacing:0.131px">Околокомпьютерное</a><div class="s d" style="left:81px;top:22px;letter-spacing:-0.026px">Софт, игры, ноутбуки, системные блоки и иже с ними.</div><div class="s sub" style="left:81px;top:35px;letter-spacing:-0.078px"><span style="margin-right:3px">Подразделы:</span> <svg width="7" height="10" viewBox="0 0 7 10" style="display:inline-block;vertical-align:-1px;margin:0 4px 0 3px"><path d="M0.6 0.6 H4.4 L6.4 2.6 V9.4 H0.6 Z" fill="#fff" stroke="#b23a55" stroke-width="1.1"/><path d="M4.2 0.8 V2.9 H6.2" fill="none" stroke="#b23a55" stroke-width=".9"/></svg><a>Софт</a> <svg width="7" height="10" viewBox="0 0 7 10" style="display:inline-block;vertical-align:-1px;margin:0 4px 0 3px"><path d="M0.6 0.6 H4.4 L6.4 2.6 V9.4 H0.6 Z" fill="#fff" stroke="#4f7485" stroke-width="1.1"/><path d="M4.2 0.8 V2.9 H6.2" fill="none" stroke="#4f7485" stroke-width=".9"/></svg><a>Программирование</a> <svg width="7" height="10" viewBox="0 0 7 10" style="display:inline-block;vertical-align:-1px;margin:0 4px 0 3px"><path d="M0.6 0.6 H4.4 L6.4 2.6 V9.4 H0.6 Z" fill="#fff" stroke="#b23a55" stroke-width="1.1"/><path d="M4.2 0.8 V2.9 H6.2" fill="none" stroke="#b23a55" stroke-width=".9"/></svg><a>Web</a> <svg width="7" height="10" viewBox="0 0 7 10" style="display:inline-block;vertical-align:-1px;margin:0 4px 0 3px"><path d="M0.6 0.6 H4.4 L6.4 2.6 V9.4 H0.6 Z" fill="#fff" stroke="#b23a55" stroke-width="1.1"/><path d="M4.2 0.8 V2.9 H6.2" fill="none" stroke="#b23a55" stroke-width=".9"/></svg><a>Игры</a> <svg width="7" height="10" viewBox="0 0 7 10" style="display:inline-block;vertical-align:-1px;margin:0 4px 0 3px"><path d="M0.6 0.6 H4.4 L6.4 2.6 V9.4 H0.6 Z" fill="#fff" stroke="#b23a55" stroke-width="1.1"/><path d="M4.2 0.8 V2.9 H6.2" fill="none" stroke="#b23a55" stroke-width=".9"/></svg><a>Телефония</a> <svg width="7" height="10" viewBox="0 0 7 10" style="display:inline-block;vertical-align:-1px;margin:0 4px 0 3px"><path d="M0.6 0.6 H4.4 L6.4 2.6 V9.4 H0.6 Z" fill="#fff" stroke="#b23a55" stroke-width="1.1"/><path d="M4.2 0.8 V2.9 H6.2" fill="none" stroke="#b23a55" stroke-width=".9"/></svg><a>Сортировочная</a></div><div class="abs" style="left:710px;top:6px"><svg width="16" height="16" viewBox="0 0 16 16" style=""><defs><linearGradient id="g33" x1=".8" y1="0" x2=".3" y2="1"><stop offset="0" stop-color="#f4a23f"/><stop offset=".5" stop-color="#e8812a"/><stop offset="1" stop-color="#d5651d"/></linearGradient></defs><rect x="0" y="0" width="16" height="16" rx="3" fill="#fbdcc0"/><rect x="0.6" y="0.6" width="14.8" height="14.8" rx="2.4" fill="url(#g33)"/><circle cx="4.3" cy="11.7" r="1.5" fill="#fff6dc"/><path d="M2.9 7.4 A5.7 5.7 0 0 1 8.6 13.1" fill="none" stroke="#fff6dc" stroke-width="1.6"/><path d="M2.9 3.8 A9.3 9.3 0 0 1 12.2 13.1" fill="none" stroke="#fff6dc" stroke-width="1.6"/></svg></div><i class="vs" style="left:734px"></i><i class="vs" style="left:840px"></i><i class="vs" style="left:946.5px;opacity:.8"></i><div class="num" style="left:735px;top:14px">15</div><div class="num" style="left:841px;top:14px">73</div><div class="lp" style="left:953px;top:8px"><a class="u">2 смартфона - 1 холивар )))</a> <svg width="11" height="9" viewBox="0 0 11 9" style="display:inline-block;vertical-align:-0.5px"><path d="M0.5 2.5 H6.5 V0.7 L10.5 4.5 L6.5 8.3 V6.5 H0.5 Z" fill="#c9edf8" stroke="#2d7698" stroke-width="1.25"/></svg><br>Сегодня, 02:06 <a>Kalina44</a></div></div>
<i class="sepl" style="top:74px;background:#2e5f85"></i><div class="row frow" style="top:75px;height:44px"><div class="ic" style="left:9px;top:9px"><svg width="27" height="27" viewBox="0 0 27 27" style=""><defs><linearGradient id="g25" x1="0" y1="0" x2="0.6" y2="1"><stop offset="0" stop-color="#ffffff"/><stop offset=".55" stop-color="#f1f1f2"/><stop offset="1" stop-color="#d4d6d9"/></linearGradient></defs><rect x="0.5" y="0.5" width="26" height="26" fill="url(#g25)" stroke="#a8536c" stroke-width="1"/><rect x="1.5" y="1.5" width="24" height="24" fill="none" stroke="#f5c6d2" stroke-width="1" opacity=".55"/><rect x="9" y="6.9" width="6" height="1.2" fill="#e2557c"/><rect x="9" y="10.0" width="9" height="0.5" fill="#e2557c"/><rect x="9" y="12.1" width="8.6" height="0.5" fill="#e2557c"/><rect x="9" y="6" width="6" height="1.4" fill="#4a0a1c"/><rect x="9" y="9.2" width="9" height="0.9" fill="#4a0a1c"/><rect x="9" y="11.3" width="8.6" height="0.9" fill="#4a0a1c"/><rect x="9" y="15.9" width="6" height="1.2" fill="#e2557c"/><rect x="9" y="19.0" width="9" height="0.5" fill="#e2557c"/><rect x="9" y="21.1" width="8.6" height="0.5" fill="#e2557c"/><rect x="9" y="15" width="6" height="1.4" fill="#4a0a1c"/><rect x="9" y="18.2" width="9" height="0.9" fill="#4a0a1c"/><rect x="9" y="20.3" width="8.6" height="0.9" fill="#4a0a1c"/></svg></div><div class="abs" style="left:44px;top:19px"><svg width="32" height="18" viewBox="0 0 32 18" style="overflow:visible"><defs><linearGradient id="g26" x1="0" y1="0" x2="0.3" y2="1"><stop offset="0" stop-color="#e8342f"/><stop offset=".55" stop-color="#c9161c"/><stop offset="1" stop-color="#8f0d13"/></linearGradient><radialGradient id="g27" cx=".5" cy=".5" r=".5"><stop offset="0" stop-color="#e9eaec"/><stop offset=".55" stop-color="#b9bcc0"/><stop offset=".6" stop-color="#2e2f31"/><stop offset="1" stop-color="#232425"/></radialGradient></defs><ellipse cx="16" cy="15.2" rx="14.5" ry="2" fill="#6d7783" opacity=".28"/><path d="M0.4 10.6 C0.5 8.6 2 7.5 4 6.8 L10.5 4.6 C14 3.4 20 2.5 24 2.6 C28 2.8 30.8 3.8 31 6 L31 9.4 C30.6 10.6 29.6 11.2 28 11.7 L17.4 15.7 C13 16.6 8 16 4.5 14.8 C1.8 13.8 0.3 12.6 0.4 10.6 Z" fill="url(#g26)"/><path d="M10.8 4.6 L12.6 1.5 C15.5 0.6 21 0.7 23.8 1.6 L26.4 3.2 C22 2.8 15 3.4 10.8 4.6 Z" fill="#8c9197"/><path d="M12.4 4.2 C16 3.2 21.5 2.8 25.8 3.2 L22.6 5.2 C19.5 5 16 5.4 13.2 6.2 Z" fill="#4e2a2e"/><path d="M15.4 3.2 L16.2 1.4 L18.4 1.3 L18 3 Z M20 2.9 L20.6 1.3 L22.8 1.5 L22.6 3 Z" fill="#5d6166"/><path d="M1.4 9.2 C4 7.8 7.6 6.8 10.8 6.4" stroke="#ff8d84" stroke-width=".9" fill="none" opacity=".75"/><path d="M4.6 11.3 C5.8 10.5 7.6 10.2 8.8 10.4 C8.4 11.4 6.6 12.2 4.8 12.2 Z" fill="#ffe1d6"/><path d="M1 11.6 C2 12.8 4 13.8 6 14.2" stroke="#6e0a0f" stroke-width=".8" fill="none"/><ellipse cx="14.3" cy="13.9" rx="2.5" ry="2.8" fill="#2b2c2e"/><ellipse cx="14.2" cy="14" rx="1.4" ry="1.6" fill="#c3c6ca"/><ellipse cx="14.2" cy="14" rx=".5" ry=".6" fill="#6a6d71"/><ellipse cx="29" cy="9.3" rx="1.9" ry="2.3" fill="#2b2c2e"/><ellipse cx="28.9" cy="9.4" rx="1" ry="1.3" fill="#c3c6ca"/></svg></div><a class="t" style="left:81px;top:5px;letter-spacing:-0.244px">Автофорум</a><div class="s d" style="left:81px;top:22px;letter-spacing:-0.05px">Все о авто-мото.</div><div class="abs" style="left:710px;top:6px"><svg width="16" height="16" viewBox="0 0 16 16" style=""><defs><linearGradient id="g34" x1=".8" y1="0" x2=".3" y2="1"><stop offset="0" stop-color="#f4a23f"/><stop offset=".5" stop-color="#e8812a"/><stop offset="1" stop-color="#d5651d"/></linearGradient></defs><rect x="0" y="0" width="16" height="16" rx="3" fill="#fbdcc0"/><rect x="0.6" y="0.6" width="14.8" height="14.8" rx="2.4" fill="url(#g34)"/><circle cx="4.3" cy="11.7" r="1.5" fill="#fff6dc"/><path d="M2.9 7.4 A5.7 5.7 0 0 1 8.6 13.1" fill="none" stroke="#fff6dc" stroke-width="1.6"/><path d="M2.9 3.8 A9.3 9.3 0 0 1 12.2 13.1" fill="none" stroke="#fff6dc" stroke-width="1.6"/></svg></div><i class="vs" style="left:734px"></i><i class="vs" style="left:840px"></i><i class="vs" style="left:946.5px;opacity:.8"></i><div class="num" style="left:735px;top:14px">1</div><div class="num" style="left:841px;top:14px">1</div><div class="lp" style="left:953px;top:8px"><a class="u">дизайн авто</a> <svg width="11" height="9" viewBox="0 0 11 9" style="display:inline-block;vertical-align:-0.5px"><path d="M0.5 2.5 H6.5 V0.7 L10.5 4.5 L6.5 8.3 V6.5 H0.5 Z" fill="#c9edf8" stroke="#2d7698" stroke-width="1.25"/></svg><br>Вчера, 19:25 <a>kuz-kuz</a></div></div>
<i class="sepl" style="top:119px;background:#2e5f85"></i><div class="row frow" style="top:120px;height:44px"><div class="ic" style="left:9px;top:9px"><svg width="27" height="27" viewBox="0 0 27 27" style=""><defs><linearGradient id="g28" x1="0" y1="0" x2="0.6" y2="1"><stop offset="0" stop-color="#ffffff"/><stop offset=".55" stop-color="#f1f1f2"/><stop offset="1" stop-color="#d4d6d9"/></linearGradient></defs><rect x="0.5" y="0.5" width="26" height="26" fill="url(#g28)" stroke="#a8536c" stroke-width="1"/><rect x="1.5" y="1.5" width="24" height="24" fill="none" stroke="#f5c6d2" stroke-width="1" opacity=".55"/><rect x="9" y="6.9" width="6" height="1.2" fill="#e2557c"/><rect x="9" y="10.0" width="9" height="0.5" fill="#e2557c"/><rect x="9" y="12.1" width="8.6" height="0.5" fill="#e2557c"/><rect x="9" y="6" width="6" height="1.4" fill="#4a0a1c"/><rect x="9" y="9.2" width="9" height="0.9" fill="#4a0a1c"/><rect x="9" y="11.3" width="8.6" height="0.9" fill="#4a0a1c"/><rect x="9" y="15.9" width="6" height="1.2" fill="#e2557c"/><rect x="9" y="19.0" width="9" height="0.5" fill="#e2557c"/><rect x="9" y="21.1" width="8.6" height="0.5" fill="#e2557c"/><rect x="9" y="15" width="6" height="1.4" fill="#4a0a1c"/><rect x="9" y="18.2" width="9" height="0.9" fill="#4a0a1c"/><rect x="9" y="20.3" width="8.6" height="0.9" fill="#4a0a1c"/></svg></div><div class="abs" style="left:44px;top:12px"><svg width="32" height="25" viewBox="0 0 32 25" style="overflow:visible"><defs><linearGradient id="g29" x1="0" y1="0" x2="1" y2="1"><stop offset="0" stop-color="#f1f2f3"/><stop offset=".5" stop-color="#c9cbce"/><stop offset="1" stop-color="#8e9196"/></linearGradient><linearGradient id="g30" x1="0" y1="0" x2="1" y2="1"><stop offset="0" stop-color="#e03634"/><stop offset="1" stop-color="#a30f15"/></linearGradient></defs><path d="M2.2 12 C2.6 8.4 4.4 7 7 5.6 L15.6 1 C17.4 0.4 19.6 1 21.8 2.6 L18.6 4.6 L16.4 3.6 L8 8.2 C6.2 9.2 5.4 10.4 5.4 12.6 Z" fill="#3b3c3f"/><path d="M5 10.8 C6 9 8 7.8 10 7 L20 3.4 L30 4.4 C31.2 5 31.7 8 31.6 11 C31.6 14 31.4 17.4 30.8 19 L20.6 23.8 C17 24.6 13.4 24 11 22.6 L5.6 17 Z" fill="url(#g29)" stroke="#808389" stroke-width=".5"/><path d="M14 8.6 L15.8 21.8" stroke="#7d8085" stroke-width="1"/><path d="M16.8 7.6 L18.2 21.4" stroke="#f5f5f6" stroke-width=".8"/><path d="M20 9.4 L22.4 7.6 L30 6 C31.2 8 31.4 15 30.6 18.6 L20.8 22.8 L19.2 18.8 Z" fill="url(#g30)"/><path d="M22.8 9.4 L29.4 7.6 L29.8 15.2 L22.6 18.2 Z" fill="#ee4a44" opacity=".45"/><ellipse cx="7.3" cy="16.9" rx="5" ry="5.6" fill="#56585c" stroke="#2f3033" stroke-width="1"/><ellipse cx="7" cy="17.1" rx="3.5" ry="4" fill="#8c1218" stroke="#c9cacd" stroke-width=".7"/><ellipse cx="6.8" cy="17.2" rx="2" ry="2.3" fill="#d9dadc"/><ellipse cx="6.7" cy="17.4" rx="1" ry="1.2" fill="#3a1012"/></svg></div><a class="t" style="left:81px;top:5px;letter-spacing:0.104px">Бытовая техника</a><div class="s d" style="left:81px;top:22px;letter-spacing:0.033px">СВЧ-печи, телевизоры, стиральные машины и т.п.</div><div class="abs" style="left:710px;top:6px"><svg width="16" height="16" viewBox="0 0 16 16" style=""><defs><linearGradient id="g35" x1=".8" y1="0" x2=".3" y2="1"><stop offset="0" stop-color="#f4a23f"/><stop offset=".5" stop-color="#e8812a"/><stop offset="1" stop-color="#d5651d"/></linearGradient></defs><rect x="0" y="0" width="16" height="16" rx="3" fill="#fbdcc0"/><rect x="0.6" y="0.6" width="14.8" height="14.8" rx="2.4" fill="url(#g35)"/><circle cx="4.3" cy="11.7" r="1.5" fill="#fff6dc"/><path d="M2.9 7.4 A5.7 5.7 0 0 1 8.6 13.1" fill="none" stroke="#fff6dc" stroke-width="1.6"/><path d="M2.9 3.8 A9.3 9.3 0 0 1 12.2 13.1" fill="none" stroke="#fff6dc" stroke-width="1.6"/></svg></div><i class="vs" style="left:734px"></i><i class="vs" style="left:840px"></i><i class="vs" style="left:946.5px;opacity:.8"></i><div class="num" style="left:735px;top:14px">1</div><div class="num" style="left:841px;top:14px">5</div><div class="lp" style="left:953px;top:8px"><a class="u">цифровик для начинающего</a> <svg width="11" height="9" viewBox="0 0 11 9" style="display:inline-block;vertical-align:-0.5px"><path d="M0.5 2.5 H6.5 V0.7 L10.5 4.5 L6.5 8.3 V6.5 H0.5 Z" fill="#c9edf8" stroke="#2d7698" stroke-width="1.25"/></svg><br>Вчера, 19:07 <a>doors</a></div></div>
<i class="sepl" style="top:164px;background:#2e5f85"></i><div class="row frow" style="top:165px;height:44px"><div class="ic" style="left:9px;top:9px"><svg width="27" height="27" viewBox="0 0 27 27" style=""><defs><linearGradient id="g31" x1="0" y1="0" x2="0.6" y2="1"><stop offset="0" stop-color="#ffffff"/><stop offset=".55" stop-color="#f1f1f2"/><stop offset="1" stop-color="#d4d6d9"/></linearGradient></defs><rect x="0.5" y="0.5" width="26" height="26" fill="url(#g31)" stroke="#2b4f66" stroke-width="1"/><rect x="1.5" y="1.5" width="24" height="24" fill="none" stroke="#cfe0ec" stroke-width="1" opacity=".55"/><rect x="9" y="6.9" width="6" height="1.2" fill="#8a9096"/><rect x="9" y="10.0" width="9" height="0.5" fill="#8a9096"/><rect x="9" y="12.1" width="8.6" height="0.5" fill="#8a9096"/><rect x="9" y="6" width="6" height="1.4" fill="#1c1f24"/><rect x="9" y="9.2" width="9" height="0.9" fill="#1c1f24"/><rect x="9" y="11.3" width="8.6" height="0.9" fill="#1c1f24"/><rect x="9" y="15.9" width="6" height="1.2" fill="#8a9096"/><rect x="9" y="19.0" width="9" height="0.5" fill="#8a9096"/><rect x="9" y="21.1" width="8.6" height="0.5" fill="#8a9096"/><rect x="9" y="15" width="6" height="1.4" fill="#1c1f24"/><rect x="9" y="18.2" width="9" height="0.9" fill="#1c1f24"/><rect x="9" y="20.3" width="8.6" height="0.9" fill="#1c1f24"/></svg></div><div class="abs" style="left:46px;top:9px"><svg width="32" height="29" viewBox="0 0 32 29" style=""><defs><linearGradient id="g32" x1="0" y1="0" x2="0.2" y2="1"><stop offset="0" stop-color="#e9cb8b"/><stop offset="1" stop-color="#d0a24f"/></linearGradient></defs><ellipse cx="14.5" cy="26.6" rx="13.5" ry="1.5" fill="#8e99a6" opacity=".3"/><path d="M5.2 0.8 H24 L26.4 6 H2.8 Z" fill="#f0dcab" stroke="#d2ac60" stroke-width=".6"/><rect x="2.8" y="6" width="23.6" height="20.4" rx="1" fill="url(#g32)" stroke="#c79a48" stroke-width=".6"/><rect x="12" y="0.8" width="5.2" height="8.6" fill="#f6ebca" opacity=".85"/></svg></div><a class="t" style="left:81px;top:5px;letter-spacing:-0.025px">Сортировочная</a><div class="abs" style="left:710px;top:6px"><svg width="16" height="16" viewBox="0 0 16 16" style=""><defs><linearGradient id="g36" x1=".8" y1="0" x2=".3" y2="1"><stop offset="0" stop-color="#f4a23f"/><stop offset=".5" stop-color="#e8812a"/><stop offset="1" stop-color="#d5651d"/></linearGradient></defs><rect x="0" y="0" width="16" height="16" rx="3" fill="#fbdcc0"/><rect x="0.6" y="0.6" width="14.8" height="14.8" rx="2.4" fill="url(#g36)"/><circle cx="4.3" cy="11.7" r="1.5" fill="#fff6dc"/><path d="M2.9 7.4 A5.7 5.7 0 0 1 8.6 13.1" fill="none" stroke="#fff6dc" stroke-width="1.6"/><path d="M2.9 3.8 A9.3 9.3 0 0 1 12.2 13.1" fill="none" stroke="#fff6dc" stroke-width="1.6"/></svg></div><i class="vs" style="left:734px"></i><i class="vs" style="left:840px"></i><i class="vs" style="left:946.5px;opacity:.8"></i><div class="num" style="left:735px;top:14px">0</div><div class="num" style="left:841px;top:14px">0</div><div class="lp" style="left:953px;top:8px;font-size:10.9px">Нет сообщений</div></div>
</div>
</div></div>
<div id="chrome-top"></div><div id="chrome-line"></div>
<div id="sb"><svg width="17" height="17" viewBox="0 0 17 17" style="position:absolute;left:0;top:0"><path d="M4.5 10.5 L8.5 6 L12.5 10.5 Z" fill="#4b4b4b"/></svg><div class="thumb"><i class="grip"></i></div><svg width="17" height="17" viewBox="0 0 17 17" style="position:absolute;left:0;top:926px"><path d="M4.5 6.5 L8.5 11 L12.5 6.5 Z" fill="#4b4b4b"/></svg></div>
<div id="task"><i class="orb"></i><i class="b" style="left:245px;width:60px"></i><i class="b" style="left:307px;width:60px"></i></div>
</body></html>
